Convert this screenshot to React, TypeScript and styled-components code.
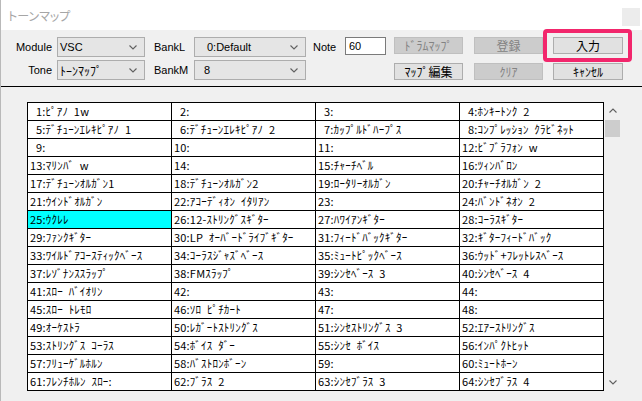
import React from 'react';
import styled, { createGlobalStyle } from 'styled-components';

const UI_FONT = `"Liberation Sans", "Noto Sans CJK JP", sans-serif`;
const JP_FONT = `"Noto Sans CJK JP", sans-serif`;

const GlobalStyle = createGlobalStyle`
  html, body {
    margin: 0;
    padding: 0;
    background: #f0f0f0;
  }
  body {
    width: 642px;
    height: 401px;
    overflow: hidden;
  }
`;

const tones = [
  'ﾋﾟｱﾉ 1w', '', '', 'ﾎﾝｷｰﾄﾝｸ 2',
  'ﾃﾞﾁｭｰﾝｴﾚｷﾋﾟｱﾉ 1', 'ﾃﾞﾁｭｰﾝｴﾚｷﾋﾟｱﾉ 2', 'ｶｯﾌﾟﾙﾄﾞﾊｰﾌﾟｽ', 'ｺﾝﾌﾟﾚｯｼｮﾝ ｸﾗﾋﾞﾈｯﾄ',
  '', '', '', 'ﾋﾞﾌﾞﾗﾌｫﾝ w',
  'ﾏﾘﾝﾊﾞ w', '', 'ﾁｬｰﾁﾍﾞﾙ', 'ﾂｨﾝﾊﾞﾛﾝ',
  'ﾃﾞﾁｭｰﾝｵﾙｶﾞﾝ1', 'ﾃﾞﾁｭｰﾝｵﾙｶﾞﾝ2', 'ﾛｰﾀﾘｰｵﾙｶﾞﾝ', 'ﾁｬｰﾁｵﾙｶﾞﾝ 2',
  'ｳｲﾝﾄﾞｵﾙｶﾞﾝ', 'ｱｺｰﾃﾞｨｵﾝ ｲﾀﾘｱﾝ', '', 'ﾊﾞﾝﾄﾞﾈｵﾝ 2',
  'ｳｸﾚﾚ', '12-ｽﾄﾘﾝｸﾞｽｷﾞﾀｰ', 'ﾊﾜｲｱﾝｷﾞﾀｰ', 'ｺｰﾗｽｷﾞﾀｰ',
  'ﾌｧﾝｸｷﾞﾀｰ', 'LP ｵｰﾊﾞｰﾄﾞﾗｲﾌﾞｷﾞﾀｰ', 'ﾌｨｰﾄﾞﾊﾞｯｸｷﾞﾀｰ', 'ｷﾞﾀｰﾌｨｰﾄﾞﾊﾞｯｸ',
  'ﾜｲﾙﾄﾞｱｺｰｽﾃｨｯｸﾍﾞｰｽ', 'ｺｰﾗｽｼﾞｬｽﾞﾍﾞｰｽ', 'ﾐｭｰﾄﾋﾟｯｸﾍﾞｰｽ', 'ｳｯﾄﾞ+ﾌﾚｯﾄﾚｽﾍﾞｰｽ',
  'ﾚｿﾞﾅﾝｽｽﾗｯﾌﾟ', 'FMｽﾗｯﾌﾟ', 'ｼﾝｾﾍﾞｰｽ 3', 'ｼﾝｾﾍﾞｰｽ 4',
  'ｽﾛｰ ﾊﾞｲｵﾘﾝ', '', '', '',
  'ｽﾛｰ ﾄﾚﾓﾛ', 'ｿﾛ ﾋﾟﾁｶｰﾄ', '', '',
  'ｵｰｹｽﾄﾗ', 'ﾚｶﾞｰﾄｽﾄﾘﾝｸﾞｽ', 'ｼﾝｾｽﾄﾘﾝｸﾞｽ 3', 'ｴｱｰｽﾄﾘﾝｸﾞｽ',
  'ｽﾄﾘﾝｸﾞｽ ｺｰﾗｽ', 'ﾎﾞｲｽ ﾀﾞｰ', 'ｼﾝｾ ﾎﾞｲｽ', 'ｲﾝﾊﾟｸﾄﾋｯﾄ',
  'ﾌﾘｭｰｹﾞﾙﾎﾙﾝ', 'ﾊﾞｽﾄﾛﾝﾎﾞｰﾝ', '', 'ﾐｭｰﾄﾎｰﾝ',
  'ﾌﾚﾝﾁﾎﾙﾝ ｽﾛｰ:', 'ﾌﾞﾗｽ 2', 'ｼﾝｾﾌﾞﾗｽ 3', 'ｼﾝｾﾌﾞﾗｽ 4',
];

const Window = styled.div`
  position: relative;
  width: 642px;
  height: 401px;
  box-sizing: border-box;
  border-left: 1px solid #b9b9b9;
  background: #f0f0f0;
  font-family: ${UI_FONT};
  font-size: 11px;
  color: #000;
  overflow: hidden;
  display: flex;
  flex-direction: column;
`;

const TitleBar = styled.div`
  height: 30px;
  flex-shrink: 0;
  background: #fff;
  display: flex;
  align-items: flex-start;
  justify-content: space-between;
  padding: 0 2px 0 7px;
`;

const Title = styled.span`
  margin-top: 7px;
  font-family: ${JP_FONT};
  font-size: 12px;
  color: #a6a6a6;
  font-feature-settings: 'palt';
`;

const CloseBox = styled.div`
  width: 18px;
  height: 18px;
  margin-top: 8px;
  background: #ececec;
`;

const Toolbar = styled.div`
  display: grid;
  grid-template-columns: 56px 88px 49px 112px 39px 41px 77px 80px 80px;
  grid-template-rows: 20px 20px;
  row-gap: 3px;
  padding: 7px 0 6px 0;
  border-bottom: 1px solid #000;
`;

const Label = styled.span<{ $right?: boolean; $pad?: number }>`
  display: flex;
  align-items: center;
  justify-content: ${(p) => (p.$right ? 'flex-end' : 'flex-start')};
  padding-right: ${(p) => (p.$right ? 5 : 0)}px;
  padding-left: ${(p) => p.$pad ?? 0}px;
`;

const Select = styled.div<{ $indent?: number }>`
  display: flex;
  align-items: center;
  justify-content: space-between;
  box-sizing: border-box;
  height: 20px;
  padding: 0 7px 0 ${(p) => p.$indent ?? 2}px;
  background: #e5e5e5;
  border: 1px solid #adadad;
`;

const Jp = styled.span<{ $size?: number }>`
  font-family: ${JP_FONT};
  font-size: ${(p) => p.$size ?? 12}px;
`;

const NoteInput = styled.input`
  box-sizing: border-box;
  width: 41px;
  height: 18px;
  align-self: start;
  margin: 0;
  padding: 0 3px;
  border: 1px solid #7a7a7a;
  background: #fff;
  font-family: ${UI_FONT};
  font-size: 11px;
  outline: none;
`;

const Button = styled.button<{ $w: number; $valign: 'start' | 'end' }>`
  box-sizing: border-box;
  width: ${(p) => p.$w}px;
  height: 17px;
  justify-self: end;
  align-self: ${(p) => p.$valign};
  margin: 0;
  padding: 0;
  background: #e1e1e1;
  border: 1px solid #adadad;
  color: #000;
  font-family: ${JP_FONT};
  font-size: 12px;
  line-height: 15px;

  &:disabled {
    background: #cccccc;
    border-color: #bfbfbf;
    color: #838383;
  }
`;

const Highlight = styled.div`
  position: absolute;
  left: 542px;
  top: 29px;
  width: 89px;
  height: 33px;
  box-sizing: border-box;
  border: 4px solid #f2266c;
  border-radius: 4px;
  pointer-events: none;
`;

const Content = styled.div`
  display: flex;
  align-items: flex-start;
  padding: 15px 0 0 26px;
`;

const ToneList = styled.div`
  display: grid;
  grid-template-columns: repeat(4, 143px);
  grid-auto-rows: 17px;
  gap: 1px;
  background: #000;
  border: 1px solid #000;
`;

const Cell = styled.div<{ $selected?: boolean; $indent?: boolean }>`
  background: ${(p) => (p.$selected ? '#00ffff' : '#fff')};
  padding-left: ${(p) => (p.$indent ? 8 : 2)}px;
  font-family: ${JP_FONT};
  font-size: 11px;
  letter-spacing: 0.2px;
  word-spacing: 3px;
  line-height: 17px;
  white-space: pre;
  overflow: hidden;
`;

const ScrollBar = styled.div`
  width: 17px;
  height: 289px;
  display: flex;
  flex-direction: column;
  background: #f0f0f0;
`;

const ArrowButton = styled.div`
  height: 17px;
  display: flex;
  align-items: center;
  justify-content: center;
`;

const Thumb = styled.div`
  height: 17px;
  margin: 1px 1px 0 1px;
  background: #cdcdcd;
`;

const Track = styled.div`
  flex: 1;
`;

const Chevron = ({ up }: { up?: boolean }) => (
  <svg width="8" height="5" viewBox="0 0 8 5">
    <polyline
      points={up ? '0.5,4.5 4,1 7.5,4.5' : '0.5,0.5 4,4 7.5,0.5'}
      fill="none"
      stroke="#606060"
      strokeWidth="1.1"
    />
  </svg>
);

const App = () => {
  return (
    <Window>
      <GlobalStyle />
      <TitleBar>
        <Title>トーンマップ</Title>
        <CloseBox />
      </TitleBar>

      <Toolbar>
        <Label $right>Module</Label>
        <Select>
          <span>VSC</span>
          <Chevron />
        </Select>
        <Label $pad={9}>BankL</Label>
        <Select $indent={12}>
          <span>0:Default</span>
          <Chevron />
        </Select>
        <Label $pad={7}>Note</Label>
        <NoteInput value="60" readOnly />
        <Button $w={69} $valign="start" disabled>
          ﾄﾞﾗﾑﾏｯﾌﾟ
        </Button>
        <Button $w={69} $valign="start" disabled>
          登録
        </Button>
        <Button $w={70} $valign="start">
          入力
        </Button>

        <Label $right>Tone</Label>
        <Select>
          <Jp>ﾄｰﾝﾏｯﾌﾟ</Jp>
          <Chevron />
        </Select>
        <Label $pad={9}>BankM</Label>
        <Select $indent={9}>
          <span>8</span>
          <Chevron />
        </Select>
        <span />
        <span />
        <Button $w={69} $valign="end">
          ﾏｯﾌﾟ編集
        </Button>
        <Button $w={69} $valign="end" disabled>
          ｸﾘｱ
        </Button>
        <Button $w={70} $valign="end">
          ｷｬﾝｾﾙ
        </Button>
      </Toolbar>

      <Content>
        <ToneList>
          {tones.map((name, i) => (
            <Cell key={i} $indent={i < 9} $selected={i === 24}>
              {`${i + 1}:${name}`}
            </Cell>
          ))}
        </ToneList>
        <ScrollBar>
          <ArrowButton>
            <Chevron up />
          </ArrowButton>
          <Thumb />
          <Track />
          <ArrowButton>
            <Chevron />
          </ArrowButton>
        </ScrollBar>
      </Content>

      <Highlight />
    </Window>
  );
};

export default App;
